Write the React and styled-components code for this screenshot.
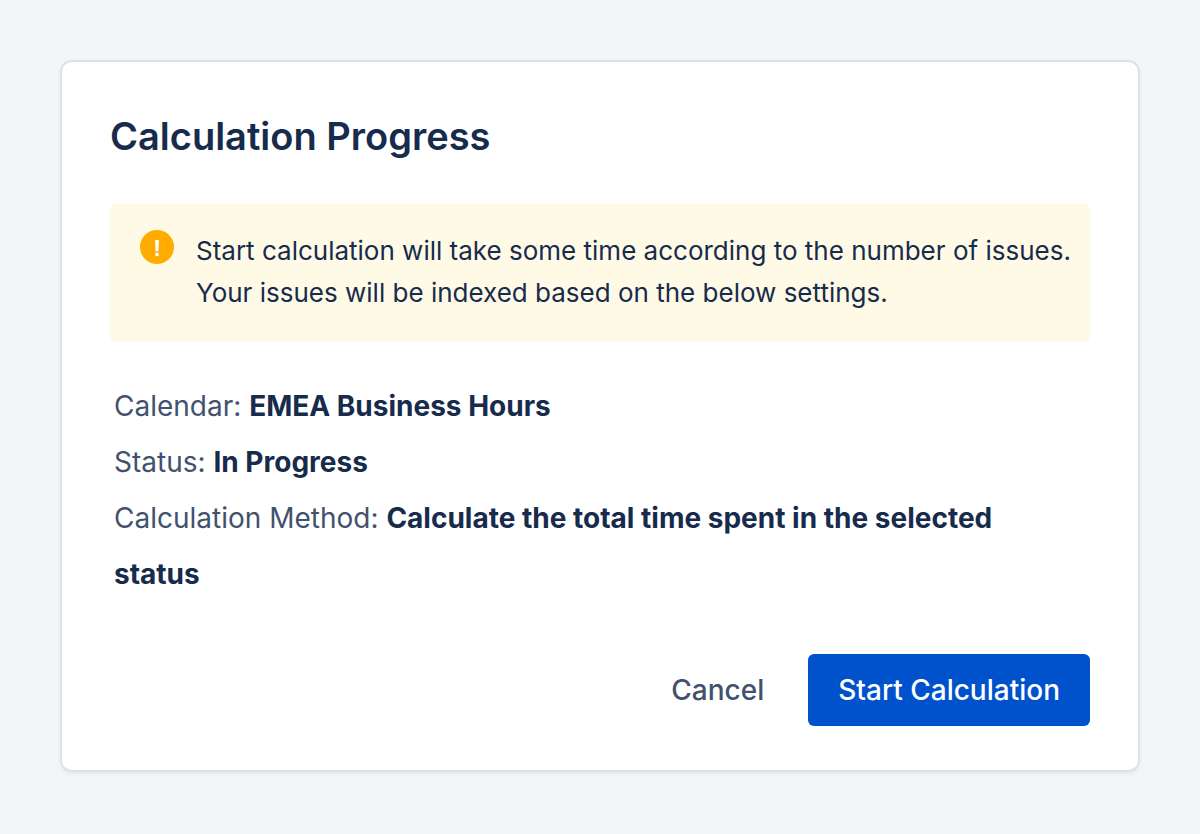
import React from "react";
import styled, { createGlobalStyle } from "styled-components";

const GlobalStyle = createGlobalStyle`
  * {
    box-sizing: border-box;
  }

  body {
    margin: 0;
    background-color: #f4f5f7;
    font-family: Inter, "Liberation Sans", sans-serif;
    color: #172b4d;
  }
`;

const Page = styled.main`
  min-height: 100vh;
  padding: 60px;
`;

const Card = styled.section`
  padding: 48px;
  padding-bottom: 44px;
  background-color: #fff;
  border: 2px solid #dfe1e5;
  border-radius: 12px;
  box-shadow: 0 2px 4px rgba(0, 0, 0, 0.06);
`;

const Title = styled.h1`
  margin: 0 0 42px;
  font-size: 38px;
  font-weight: 600;
  line-height: 52px;
`;

const Notice = styled.div`
  display: flex;
  gap: 22px;
  padding: 26px 16px 28px 30px;
  border-radius: 6px;
  background-color: #fffae6;
`;

const NoticeIcon = styled.svg`
  flex-shrink: 0;
  width: 34px;
  height: 34px;
`;

const NoticeText = styled.p`
  margin: 0;
  font-size: 26px;
  line-height: 42px;
`;

const Details = styled.dl`
  margin: 36px 0 0;
  padding: 0 28px 0 4px;
  font-size: 28px;
  line-height: 56px;
`;

const Label = styled.dt`
  display: inline;
  color: #42526e;
`;

const Value = styled.dd`
  display: inline;
  margin: 0;
  font-weight: 700;
`;

const Actions = styled.div`
  display: flex;
  justify-content: flex-end;
  gap: 14px;
  margin-top: 52px;
`;

const Button = styled.button`
  height: 72px;
  padding: 0 30px;
  border: none;
  border-radius: 6px;
  background-color: ${({ $primary }) => ($primary ? "#0052cc" : "transparent")};
  color: ${({ $primary }) => ($primary ? "#fff" : "#42526e")};
  font-family: inherit;
  font-size: 28px;
  font-weight: 500;
  cursor: pointer;
`;

const details = [
  { label: "Calendar", value: "EMEA Business Hours" },
  { label: "Status", value: "In Progress" },
  {
    label: "Calculation Method",
    value: "Calculate the total time spent in the selected status",
  },
];

const App = () => {
  return (
    <>
      <GlobalStyle />
      <Page>
        <Card>
          <Title>Calculation Progress</Title>

          <Notice>
            <NoticeIcon viewBox="0 0 34 34" aria-hidden="true">
              <circle cx="17" cy="17" r="17" fill="#ffab00" />
              <path d="M15.1 10h3.8l-.5 11.2h-2.8z" fill="#fff" />
              <circle cx="17" cy="24.4" r="1.9" fill="#fff" />
            </NoticeIcon>
            <NoticeText>
              Start calculation will take some time according to the number of
              issues. Your issues will be indexed based on the below settings.
            </NoticeText>
          </Notice>

          <Details>
            {details.map(({ label, value }) => (
              <div key={label}>
                <Label>{label}:</Label> <Value>{value}</Value>
              </div>
            ))}
          </Details>

          <Actions>
            <Button type="button">Cancel</Button>
            <Button type="button" $primary>
              Start Calculation
            </Button>
          </Actions>
        </Card>
      </Page>
    </>
  );
};

export default App;
